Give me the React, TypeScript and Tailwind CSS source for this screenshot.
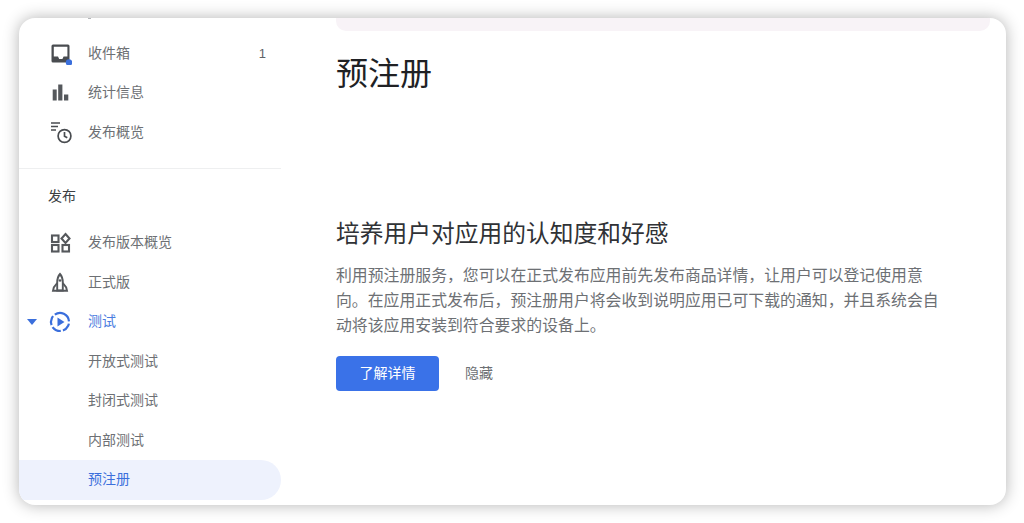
const fontStack = "font-['Liberation_Sans','Noto_Sans_CJK_SC',sans-serif]";

function InboxIcon() {
  return (
    <svg width="24" height="24" viewBox="0 0 24 24" className="text-[#494c50]">
      <path fill="currentColor" d="M5 3.500h15A1.500 1.500 0 0 1 21.500 5v15A1.500 1.500 0 0 1 20 21.500H5A1.500 1.500 0 0 1 3.500 20V5A1.500 1.500 0 0 1 5 3.500Zm.8 2.200v9.800h4.200l1.200 2.500h3.200l1.200-2.500h3.800V5.700H5.800Z" />
      <circle cx="21" cy="21.500" r="3.200" fill="#3b6fdc" />
    </svg>
  );
}

function BarsIcon() {
  return (
    <svg width="24" height="24" viewBox="0 0 24 24" className="text-[#55585c]">
      <path fill="currentColor" d="M4.700 8.500h4v11h-4v-11Zm5.500-5h4.200v16h-4.200v-16Zm5.800 10h4.300v6H16v-6Z" />
    </svg>
  );
}

function ReleaseOverviewIcon() {
  return (
    <svg width="24" height="24" viewBox="0 0 24 24" fill="none" stroke="#494c50" strokeWidth="1.700" className="overflow-visible">
      <path d="M3 3h9M3 6.500h7M3 10h5" />
      <circle cx="16.500" cy="16" r="6.400" />
      <path d="M16.500 12v4.300l2.800 1.500" />
    </svg>
  );
}

function WidgetsIcon() {
  return (
    <svg width="24" height="24" viewBox="0 0 24 24" fill="none" stroke="#55585c" strokeWidth="2.100">
      <rect x="4" y="4.500" width="6.500" height="6.500" />
      <rect x="4" y="14" width="6.500" height="6.500" />
      <rect x="14.500" y="14" width="6.500" height="6.500" />
      <path d="M17.500 3 21.500 7.500l-4 4.500-4-4.500 4-4.500Z" />
    </svg>
  );
}

function RocketIcon() {
  return (
    <svg width="24" height="24" viewBox="0 0 24 24" fill="none" stroke="#55585c" strokeWidth="1.900">
      <path d="M12 4c2 2.200 2.800 5 2.800 8.500V20.500H9.200V12.500C9.200 9 10 6.200 12 4Z" />
      <path d="M9.200 13 5.800 17.500 5 20.800h14l-.8-3.300L14.800 13" />
      <circle cx="12" cy="10.500" r="1.200" fill="#55585c" stroke="none" />
    </svg>
  );
}

function TestingIcon() {
  return (
    <svg width="24" height="24" viewBox="0 0 24 24" fill="none" className="text-[#3b6fdc]">
      <circle cx="12" cy="12" r="9" stroke="currentColor" strokeWidth="2.200" strokeDasharray="9.500 2.200" transform="rotate(-65 12 12)" />
      <path d="M9.500 7.500v9l7-4.500-7-4.500Z" fill="currentColor" />
    </svg>
  );
}

type NavRowProps = {
  label: string;
  icon?: React.ReactNode;
  active?: boolean;
  selected?: boolean;
  trailing?: string;
  caret?: boolean;
};

function NavRow({ label, icon, active, selected, trailing, caret }: NavRowProps) {
  return (
    <div className={`relative flex h-[39.5px] items-center pl-[29px] pr-[15px] rounded-r-[20px] ${selected ? "bg-[#eef2fd]" : ""}`}>
      {caret && (
        <svg width="10" height="6" viewBox="0 0 10 6" className="absolute left-[8px] top-[17px]">
          <path d="M0 0h10L5 6 0 0Z" fill="#3b6fdc" />
        </svg>
      )}
      <div className="flex w-[40px] shrink-0 items-center">{icon}</div>
      <span className={`flex-1 text-[14px] ${active ? "text-[#4a7ce0]" : selected ? "text-[#3b6fdc]" : "text-[#6d7074]"}`}>{label}</span>
      {trailing && <span className="text-[13px] text-[#5f6368]">{trailing}</span>}
    </div>
  );
}

export default function App() {
  return (
    <div className={`h-[523px] w-[1024px] overflow-hidden bg-white pb-[18px] pl-[19px] pr-[18px] pt-[18px] ${fontStack}`}>
      <div className="flex h-[487px] overflow-hidden rounded-[16px] bg-white shadow-[0_0_16px_rgba(0,0,0,0.3)]">
        <aside className="w-[262px] shrink-0">
          <div className="ml-[69px] h-[1px] w-[3px] bg-[#b5b7ba]" />
          <div className="mt-[14.5px]">
            <NavRow label="收件箱" icon={<InboxIcon />} trailing="1" />
            <NavRow label="统计信息" icon={<BarsIcon />} />
            <NavRow label="发布概览" icon={<ReleaseOverviewIcon />} />
          </div>
          <div className="mt-[16px] border-t border-[#eeeff0]" />
          <div className="flex h-[54px] items-center pt-[1px] pl-[29px] text-[14px] text-[#3c4043]">发布</div>
          <div>
            <NavRow label="发布版本概览" icon={<WidgetsIcon />} />
            <NavRow label="正式版" icon={<RocketIcon />} />
            <NavRow label="测试" icon={<TestingIcon />} active caret />
            <NavRow label="开放式测试" />
            <NavRow label="封闭式测试" />
            <NavRow label="内部测试" />
            <NavRow label="预注册" selected />
          </div>
        </aside>
        <main className="flex-1 pl-[55px] pr-[16px]">
          <div className="-mt-[1px] h-[14px] rounded-b-[10px] bg-[#f8f3f7]" />
          <h1 className="mt-[19px] text-[32px] font-normal leading-[48px] text-[#202124]">预注册</h1>
          <h2 className="mt-[118px] text-[23.75px] font-normal leading-[36px] text-[#303236]">培养用户对应用的认知度和好感</h2>
          <p className="mt-[11px] w-[610px] text-[15.87px] leading-[25px] text-[#6d7074]">
            利用预注册服务，您可以在正式发布应用前先发布商品详情，让用户可以登记使用意向。在应用正式发布后，预注册用户将会收到说明应用已可下载的通知，并且系统会自动将该应用安装到符合要求的设备上。
          </p>
          <div className="mt-[18px] flex items-center">
            <button className="h-[35px] w-[103px] rounded-[4px] bg-[#3a72e8] text-[14px] text-white">了解详情</button>
            <button className="ml-[26px] text-[14px] text-[#6d7074]">隐藏</button>
          </div>
        </main>
      </div>
    </div>
  );
}
